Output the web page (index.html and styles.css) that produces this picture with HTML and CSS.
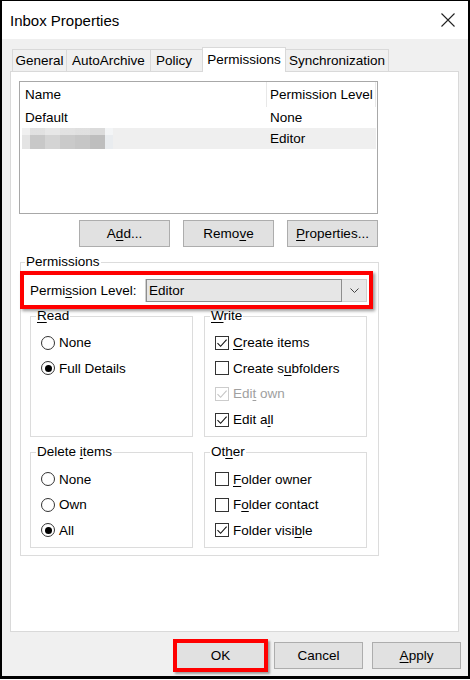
FILE: index.html
```html
<!DOCTYPE html>
<html lang="en">
<head>
<meta charset="utf-8">
<title>Inbox Properties</title>
<link rel="stylesheet" href="styles.css">
</head>
<body>
<div class="dialog">
  <div class="titlebar">
    <span class="title">Inbox Properties</span>
    <svg class="close" width="14" height="14" viewBox="0 0 14 14"><path d="M0.5 0.5 L13.5 13.5 M13.5 0.5 L0.5 13.5" stroke="#222" stroke-width="1.1" fill="none"/></svg>
  </div>
  <div class="tabs">
    <div class="tab tab-general">General</div>
    <div class="tab tab-archive">AutoArchive</div>
    <div class="tab tab-policy">Policy</div>
    <div class="tab tab-perms active">Permissions</div>
    <div class="tab tab-sync">Synchronization</div>
  </div>
  <div class="panel">
    <div class="list">
      <div class="list-head">
        <div class="col-name">Name</div>
        <div class="col-level">Permission Level</div>
      </div>
      <div class="list-row">
        <div class="col-name">Default</div>
        <div class="col-level">None</div>
      </div>
      <div class="list-row selected">
        <div class="col-name"><span class="blur"></span></div>
        <div class="col-level">Editor</div>
      </div>
    </div>
    <div class="list-buttons">
      <button class="btn">A<u>d</u>d...</button>
      <button class="btn">Remo<u>v</u>e</button>
      <button class="btn"><u>P</u>roperties...</button>
    </div>
    <fieldset class="perms">
      <legend class="perms-legend">Permissions</legend>
      <div class="level-row">
        <span class="level-label">Permi<u>s</u>sion Level:</span>
        <div class="combo">
          <div class="combo-value">Editor</div>
          <div class="combo-arrow"><svg width="9" height="5" viewBox="0 0 9 5"><path d="M0.5 0.5 L4.5 4.5 L8.5 0.5" stroke="#444" stroke-width="1" fill="none"/></svg></div>
        </div>
      </div>
      <div class="groups">
        <fieldset class="group">
          <legend class="group-legend"><u>R</u>ead</legend>
          <div class="opt"><span class="radio"></span>None</div>
          <div class="opt"><span class="radio on"></span>Full Details</div>
        </fieldset>
        <fieldset class="group">
          <legend class="group-legend"><u>W</u>rite</legend>
          <div class="opt"><span class="check"><svg width="12" height="12" viewBox="0 0 12 12"><path d="M1.5 6.2 L4.6 9.3 L10.6 2.6" stroke="#111" stroke-width="1.1" fill="none"/></svg></span><span><u>C</u>reate items</span></div>
          <div class="opt"><span class="check"></span><span>Create s<u>u</u>bfolders</span></div>
          <div class="opt disabled"><span class="check"><svg width="12" height="12" viewBox="0 0 12 12"><path d="M1.5 6.2 L4.6 9.3 L10.6 2.6" stroke="#c4c4c4" stroke-width="1.1" fill="none"/></svg></span><span>Edi<u>t</u> own</span></div>
          <div class="opt"><span class="check"><svg width="12" height="12" viewBox="0 0 12 12"><path d="M1.5 6.2 L4.6 9.3 L10.6 2.6" stroke="#111" stroke-width="1.1" fill="none"/></svg></span><span>Edit a<u>l</u>l</span></div>
        </fieldset>
        <fieldset class="group">
          <legend class="group-legend">Delete <u>i</u>tems</legend>
          <div class="opt"><span class="radio"></span>None</div>
          <div class="opt"><span class="radio"></span>Own</div>
          <div class="opt"><span class="radio on"></span>All</div>
        </fieldset>
        <fieldset class="group">
          <legend class="group-legend">Ot<u>h</u>er</legend>
          <div class="opt"><span class="check"></span><span><u>F</u>older owner</span></div>
          <div class="opt"><span class="check"></span><span>F<u>o</u>lder contact</span></div>
          <div class="opt"><span class="check"><svg width="12" height="12" viewBox="0 0 12 12"><path d="M1.5 6.2 L4.6 9.3 L10.6 2.6" stroke="#111" stroke-width="1.1" fill="none"/></svg></span><span>Folder visi<u>b</u>le</span></div>
        </fieldset>
      </div>
    </fieldset>
  </div>
  <div class="footer">
    <button class="btn btn-foot btn-ok">OK</button>
    <button class="btn btn-foot">Cancel</button>
    <button class="btn btn-foot"><u>A</u>pply</button>
  </div>
</div>
</body>
</html>
```
FILE: styles.css
```css
html, body {
  margin: 0;
  padding: 0;
  background: #ffffff;
}
body {
  font-family: "Liberation Sans", Arial, sans-serif;
  font-size: 13.5px;
  color: #000;
}
u {
  text-underline-offset: 2px;
  text-decoration-thickness: 1px;
}
.dialog {
  width: 470px;
  height: 679px;
  box-sizing: border-box;
  border-top: 1px solid #000;
  border-left: 2px solid #000;
  border-right: 2px solid #000;
  border-bottom: 3px solid #000;
  background: #f0f0f0;
  display: flex;
  flex-direction: column;
}
.titlebar {
  height: 38px;
  flex: none;
  background: #fff;
  display: flex;
  align-items: center;
  justify-content: space-between;
  padding: 0 13px 0 8px;
}
.title {
  font-size: 15px;
}
.close {
  display: block;
}
.tabs {
  flex: none;
  height: 24px;
  margin: 8px 0 0 10px;
  display: flex;
  align-items: flex-end;
}
.tab {
  height: 22px;
  box-sizing: border-box;
  border: 1px solid #d9d9d9;
  border-bottom: none;
  background: #f0f0f0;
  text-align: center;
  line-height: 22px;
  margin-left: -1px;
  white-space: nowrap;
}
.tab-general { width: 55px; margin-left: 0; }
.tab-archive { width: 85px; }
.tab-policy { width: 53px; text-align: left; padding-left: 5px; }
.tab-perms { width: 84px; }
.tab-sync { width: 104px; }
.tab.active {
  height: 25px;
  line-height: 23px;
  background: #fff;
  margin-bottom: -1px;
  position: relative;
  z-index: 1;
}
.panel {
  flex: 1;
  margin: 0 9px 0 8px;
  background: #fff;
  border: 1px solid #d9d9d9;
  padding: 9px 0 0 8px;
}
.list {
  width: 359px;
  height: 133px;
  box-sizing: border-box;
  border: 1px solid #a8a8a8;
  padding: 0 1px 0 2px;
}
.list-head, .list-row {
  display: flex;
}
.list-head {
  height: 25px;
  line-height: 25px;
}
.list-row {
  height: 21px;
  line-height: 21px;
}
.list-row.selected {
  background: #efefef;
}
.col-name {
  width: 244px;
  padding-left: 3px;
  box-sizing: border-box;
  display: flex;
  align-items: center;
}
.col-level {
  width: 110px;
  box-sizing: border-box;
  padding-left: 4px;
}
.list-head .col-level {
  border-left: 1px solid #e8e8e8;
  border-right: 1px solid #e8e8e8;
  padding-left: 3px;
}
.blur {
  display: block;
  width: 91px;
  height: 21px;
  margin-left: -3px;
  background:
    linear-gradient(to bottom, rgba(255,255,255,0.45) 0 33%, transparent 33%),
    linear-gradient(to right, #e4e4e4 0 8px, #c8c8c8 8px 23px, #d4d4d4 23px 38px, #cacaca 38px 53px, #c6c6c6 53px 68px, #bebebe 68px 83px, #e9ecef 83px 91px);
}
.list-buttons {
  width: 359px;
  margin-top: 6px;
  display: flex;
  justify-content: flex-end;
  gap: 13px;
}
.btn {
  font: inherit;
  color: #000;
  background: #e1e1e1;
  border: 1px solid #adadad;
  border-radius: 0;
  width: 91px;
  height: 27px;
  padding: 0;
  margin: 0;
}
.perms {
  margin: 6px 0 0 1px;
  width: 359px;
  box-sizing: border-box;
  border: 1px solid #dcdcdc;
  padding: 0 0 7px 0;
  min-width: 0;
}
.perms-legend {
  line-height: 18px;
  padding: 0 1px;
  margin-left: 4px;
}
.level-row {
  margin-left: -1px;
  width: 353px;
  height: 38px;
  box-sizing: border-box;
  border: 4px solid #ff0000;
  box-shadow: 2px 2px 3px rgba(0,0,0,0.4);
  background: #fff;
  display: flex;
  align-items: center;
  padding-left: 6px;
}
.level-label {
  width: 115px;
  flex: none;
  white-space: nowrap;
}
.combo {
  width: 222px;
  height: 23px;
  box-sizing: border-box;
  border: 1px solid #cfcfcf;
  background: #e8e8e8;
  display: flex;
}
.combo-value {
  flex: 1;
  border: 1px solid #8e8e8e;
  margin: -1px 0 -1px 0;
  background: #e6e6e6;
  line-height: 21px;
  padding-left: 2px;
}
.combo-arrow {
  width: 24px;
  display: flex;
  align-items: center;
  justify-content: center;
}
.combo-arrow svg {
  display: block;
}
.groups {
  margin-left: 9px;
  display: grid;
  grid-template-columns: 163px 163px;
  column-gap: 11px;
  row-gap: 8px;
}
.group {
  margin: 0;
  border: 1px solid #dcdcdc;
  padding: 7px 0 4px 10px;
  min-width: 0;
}
.group-legend {
  line-height: 14px;
  padding: 0 1px;
  margin-left: -5px;
}
.opt {
  height: 25.6px;
  display: flex;
  align-items: center;
  gap: 4px;
  white-space: nowrap;
}
.opt.disabled {
  color: #a0a0a0;
}
.radio {
  width: 14px;
  height: 14px;
  box-sizing: border-box;
  border: 1px solid #333;
  border-radius: 50%;
  background: #fff;
  flex: none;
  display: flex;
  align-items: center;
  justify-content: center;
}
.radio.on::after {
  content: "";
  width: 7px;
  height: 7px;
  border-radius: 50%;
  background: #000;
}
.check {
  width: 14px;
  height: 14px;
  box-sizing: border-box;
  border: 1px solid #333;
  background: #fff;
  flex: none;
  display: flex;
  align-items: center;
  justify-content: center;
}
.check svg {
  display: block;
}
.opt.disabled .check {
  border-color: #cccccc;
}
.footer {
  flex: none;
  display: flex;
  justify-content: flex-end;
  gap: 9px;
  padding: 10px 7px 7px 0;
}
.btn-foot {
  width: 89px;
}
.btn-ok {
  outline: 4px solid #ff0000;
  outline-offset: -1px;
  box-shadow: 2px 2px 2px 3px rgba(0,0,0,0.35);
}
```
